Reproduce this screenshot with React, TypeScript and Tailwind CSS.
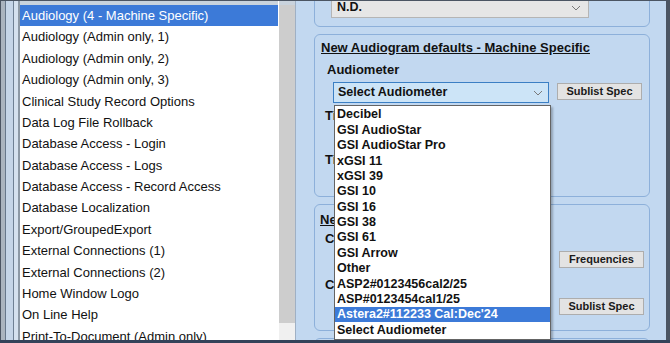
import React from "react";

const leftItems = [
  "Audiology (4 - Machine Specific)",
  "Audiology (Admin only, 1)",
  "Audiology (Admin only, 2)",
  "Audiology (Admin only, 3)",
  "Clinical Study Record Options",
  "Data Log File Rollback",
  "Database Access - Login",
  "Database Access - Logs",
  "Database Access - Record Access",
  "Database Localization",
  "Export/GroupedExport",
  "External Connections (1)",
  "External Connections (2)",
  "Home Window Logo",
  "On Line Help",
  "Print-To-Document (Admin only)",
];

const dropItems = [
  "Decibel",
  "GSI AudioStar",
  "GSI AudioStar Pro",
  "xGSI 11",
  "xGSI 39",
  "GSI 10",
  "GSI 16",
  "GSI 38",
  "GSI 61",
  "GSI Arrow",
  "Other",
  "ASP2#0123456cal2/25",
  "ASP#0123454cal1/25",
  "Astera2#112233 Cal:Dec'24",
  "Select Audiometer",
];

function Chevron() {
  return (
    <svg width="10" height="6" viewBox="0 0 10 6" className="shrink-0">
      <path d="M1 1 L5 5 L9 1" fill="none" stroke="#7a7a7a" strokeWidth="1" />
    </svg>
  );
}

function Btn({ label }: { label: string }) {
  return (
    <div className="w-[85px] h-[17px] shrink-0 bg-[#e3e3e3] border border-[#adadad] flex items-center justify-center text-[11px] font-bold text-[#1a1a1a] leading-none">
      {label}
    </div>
  );
}

function Label({ text, extra = "" }: { text: string; extra?: string }) {
  return (
    <div className={"whitespace-nowrap text-[13px] font-bold text-[#111] leading-[16px] " + extra}>
      {text}
    </div>
  );
}

export default function App() {
  return (
    <div
      className="w-[670px] h-[343px] overflow-hidden bg-[#4b5563] flex flex-col"
      style={{ fontFamily: '"Liberation Sans", Arial, sans-serif' }}
    >
      <div className="flex flex-1 min-h-0 pt-px pl-px pr-[4px]">
        {/* left frame lines */}
        <div className="w-[4px] shrink-0 bg-[#aab4bf]" />
        <div className="w-px shrink-0 bg-[#66778b]" />
        <div className="w-[7px] shrink-0 bg-[#c5d5e8]" />
        <div className="w-px shrink-0 bg-[#6f8094]" />
        <div className="w-[4px] shrink-0 bg-[#d5e1ef]" />
        <div className="w-[2px] shrink-0 bg-[#8d99a6]" />
        {/* list area */}
        <div className="flex flex-col w-[258px] shrink-0 bg-white overflow-hidden">
          <div className="h-[4px] shrink-0 bg-[#c9d3dd]" />
          {leftItems.map((t, i) => (
            <div
              key={t}
              className={
                "h-[21.4px] shrink-0 flex items-center pl-[2px] text-[13px] whitespace-nowrap " +
                (i === 0 ? "bg-[#3c7ad8] text-white" : "text-[#111]")
              }
            >
              {t}
            </div>
          ))}
        </div>
        {/* scrollbar */}
        <div className="flex flex-col w-[17px] shrink-0 bg-white pl-px">
          <div className="h-[4px] shrink-0 bg-[#c9d3dd]" />
          <div className="h-[318px] shrink-0 bg-[#cdcdcd]" />
          <div className="flex-1 bg-[#f0f0f0]" />
        </div>
        <div className="w-px shrink-0 bg-[#9fb0c4]" />
        {/* right panel */}
        <div className="relative flex-1 bg-[#c2d8f0] pl-[18px] pr-[16px] overflow-hidden">
          <div className="flex flex-col gap-[7px] mt-[-30px]">
            {/* box 1 */}
            <div className="h-[56px] shrink-0 border border-[#8db0da] rounded-[6px] pl-[16px] pt-[25px]">
              <div className="w-[258px] h-[21px] bg-[#e6e6e6] border border-[#b5b5b5] flex items-center justify-between pl-[5px] pr-[7px]">
                <span className="text-[12.5px] font-bold text-[#111]">N.D.</span>
                <Chevron />
              </div>
            </div>
            {/* box 2 */}
            <div className="h-[163px] shrink-0 border border-[#8db0da] rounded-[6px] pl-[6px] pr-[6px] pt-[5px]">
              <Label text="New Audiogram defaults - Machine Specific" extra="underline" />
              <Label text="Audiometer" extra="mt-[6px] pl-[6px]" />
              <div className="flex items-start gap-[8px] mt-[4px] pl-[12px]">
                <div className="w-[216px] h-[21px] shrink-0 bg-[#cce4f7] border border-[#3b7fc4] flex items-center justify-between pl-[4px] pr-[5px]">
                  <span className="text-[12.5px] font-bold text-[#111]">Select Audiometer</span>
                  <Chevron />
                </div>
                <div className="mt-px">
                  <Btn label="Sublist Spec" />
                </div>
              </div>
              <Label text="Ti" extra="mt-[5px] pl-[4px] text-[12px]" />
              <Label text="Ti" extra="mt-[28px] pl-[4px] text-[12px]" />
            </div>
            {/* box 3 */}
            <div className="h-[127px] shrink-0 border border-[#8db0da] rounded-[6px] pl-[5px] pr-[5px] pt-[7px]">
              <Label text="Ne" extra="underline" />
              <Label text="C" extra="mt-[3px] pl-[5px]" />
              <div className="flex justify-end mt-[4px]">
                <Btn label="Frequencies" />
              </div>
              <Label text="C" extra="mt-[9px] pl-[5px]" />
              <div className="flex justify-end mt-[5px]">
                <Btn label="Sublist Spec" />
              </div>
            </div>
            {/* box 4 */}
            <div className="h-[40px] shrink-0 border border-[#8db0da] rounded-[6px]" />
          </div>

          {/* dropdown overlay */}
          <div className="absolute left-[38px] top-[104px] w-[217px] bg-white border border-[#646464] shadow-[2px_2px_2px_rgba(0,0,0,0.25)] flex flex-col py-px">
            {dropItems.map((t, i) => (
              <div
                key={t}
                className={
                  "h-[15.4px] shrink-0 flex items-center pl-[2px] text-[12.5px] font-bold whitespace-nowrap " +
                  (i === 13 ? "bg-[#3c7ad8] text-white" : "text-[#111]")
                }
              >
                {t}
              </div>
            ))}
          </div>
        </div>
      </div>
      <div className="h-[3px] shrink-0 bg-[#34435a]" />
    </div>
  );
}
